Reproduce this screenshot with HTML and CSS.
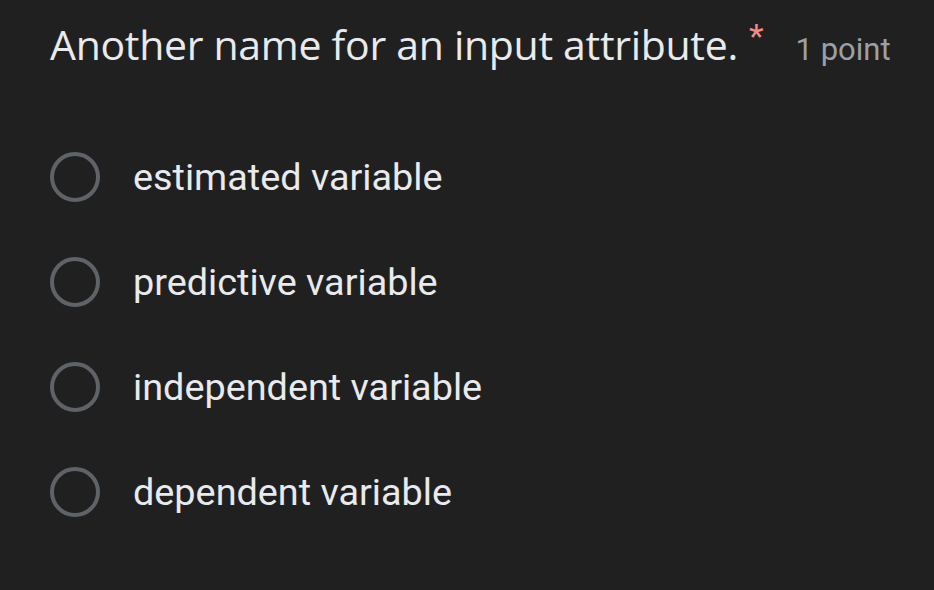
FILE: index.html
```html
<!DOCTYPE html>
<html>
<head>
<meta charset="utf-8">
<link rel="stylesheet" href="styles.css">
</head>
<body>
<div class="card">
  <div class="header">
    <span class="title">Another name for an input attribute.</span>
    <span class="req">*</span>
    <span class="points">1 point</span>
  </div>
  <div class="options">
    <div class="option"><span class="radio"></span><span class="label">estimated variable</span></div>
    <div class="option"><span class="radio"></span><span class="label">predictive variable</span></div>
    <div class="option"><span class="radio"></span><span class="label">independent variable</span></div>
    <div class="option"><span class="radio"></span><span class="label">dependent variable</span></div>
  </div>
</div>
</body>
</html>
```
FILE: styles.css
```css
html, body {
  margin: 0;
  padding: 0;
  background: #202020;
  width: 934px;
  height: 590px;
  overflow: hidden;
}
.card {
  padding: 14px 0 0 50px;
}
.header {
  display: flex;
  align-items: baseline;
  height: 60px;
}
.title {
  font-family: "Open Sans", sans-serif;
  font-size: 41px;
  line-height: 60px;
  color: #e8eaed;
  letter-spacing: -0.3px;
}
.req {
  font-family: "Roboto", sans-serif;
  color: #f28b82;
  font-size: 34px;
  margin-left: 11px;
  position: relative;
  top: -12px;
}
.points {
  font-family: "Roboto", sans-serif;
  color: #9aa0a6;
  font-size: 31px;
  margin-left: 32px;
}
.options {
  display: flex;
  flex-direction: column;
  margin-top: 50px;
}
.option {
  display: flex;
  align-items: center;
  height: 105px;
}
.radio {
  box-sizing: border-box;
  width: 50px;
  height: 50px;
  border: 4px solid #5f6368;
  border-radius: 50%;
  flex: none;
}
.label {
  font-family: "Roboto", sans-serif;
  font-size: 37.8px;
  color: #e8eaed;
  margin-left: 33px;
}
```
